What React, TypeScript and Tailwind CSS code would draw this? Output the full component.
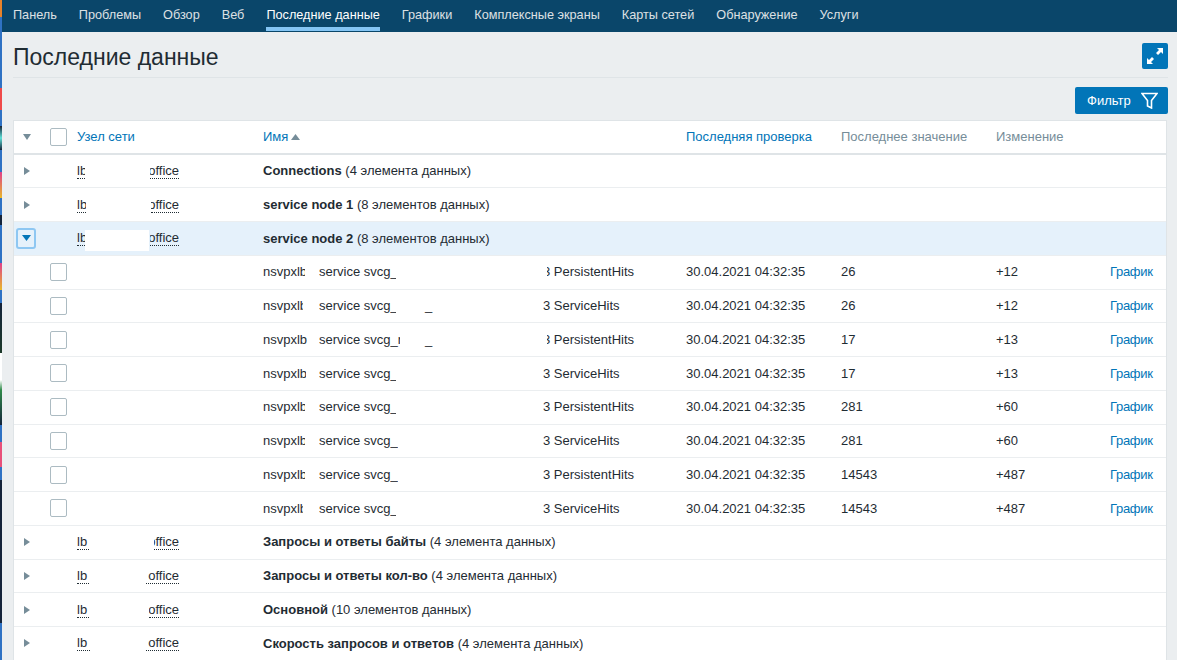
const nav = ["Панель", "Проблемы", "Обзор", "Веб", "Последние данные", "Графики", "Комплексные экраны", "Карты сетей", "Обнаружение", "Услуги"];

type Group = { a: number; b: number; title: string; count: string; open?: boolean };

function HostCell({ a, b, patch }: { a: number; b: number; patch?: boolean }) {
  return (
    <div className="flex w-[186px] shrink-0 items-center">
      <div className="flex w-[102px] shrink-0 items-center">
        <span className="block h-[16px] overflow-hidden border-b border-dotted border-[#1f2c33] leading-[16px]" style={{ width: a }}>
          lb
        </span>
        <span className={patch ? "h-[21px] w-[64px] shrink-0 translate-y-[2px] bg-white" : "hidden"} />
        <span className="ml-auto flex h-[16px] justify-end overflow-hidden border-b border-dotted border-[#1f2c33] leading-[16px]" style={{ width: b }}>
          <span className="shrink-0">office</span>
        </span>
      </div>
    </div>
  );
}

function GroupRow({ a, b, title, count, open }: Group) {
  return (
    <div className={`flex h-[33.75px] items-center border-b border-[#ebeef0] ${open ? "bg-[#e5f1fb]" : "bg-white"}`}>
      <div className="flex w-[63px] shrink-0 items-center pl-[2px]">
        {open ? (
          <span className="flex h-[21px] w-[20px] items-center justify-center rounded-[3px] border-2 border-[#8ec7f2]">
            <svg width="9" height="6" viewBox="0 0 9 6"><path d="M0 0h9L4.5 6z" fill="#0275b8" /></svg>
          </span>
        ) : (
          <svg className="ml-[8px]" width="6" height="8" viewBox="0 0 6 8"><path d="M0 0l6 4-6 4z" fill="#768d99" /></svg>
        )}
      </div>
      <HostCell a={a} b={b} patch={open} />
      <div className="whitespace-nowrap"><b className="font-bold">{title}</b> ({count})</div>
    </div>
  );
}

function Check() {
  return <span className="block h-[18px] w-[17px] rounded-[2px] border border-[#acbbc2] bg-white" />;
}

type Item = { host: number; svc: number; under?: boolean; metric: string; cut?: boolean; time: string; value: string; delta: string };

function ItemRow({ host, svc, under, metric, cut, value, delta, time }: Item) {
  return (
    <div className="flex h-[33.75px] items-center border-b border-[#ebeef0] bg-white">
      <div className="w-[36px] shrink-0" />
      <div className="w-[213px] shrink-0"><Check /></div>
      <div className="flex w-[423px] shrink-0 items-center whitespace-nowrap">
        <span className="block w-[56px] shrink-0"><span className="block overflow-hidden" style={{ width: host }}>nsvpxlb-</span></span>
        <span className="block w-[106px] shrink-0"><span className="block overflow-hidden" style={{ width: svc }}>service svcg_nsv</span></span>
        <span className="block w-[118px] shrink-0">{under ? "_" : ""}</span>
        <span className="block w-[143px] shrink-0">
          {cut ? (
            <span className="ml-[4px] block overflow-hidden"><span className="-ml-[4px] block">{metric}</span></span>
          ) : (
            metric
          )}
        </span>
      </div>
      <div className="w-[155px] shrink-0">{time}</div>
      <div className="w-[155px] shrink-0">{value}</div>
      <div className="w-[114px] shrink-0">{delta}</div>
      <div className="shrink-0 tracking-[-0.3px] text-[#0275b8]">График</div>
    </div>
  );
}

const T = "30.04.2021 04:32:35";
const PH = "3 PersistentHits";
const SH = "3 ServiceHits";

const items: Item[] = [
  { host: 42, svc: 77, metric: PH, cut: true, time: T, value: "26", delta: "+12" },
  { host: 40, svc: 77, under: true, metric: SH, time: T, value: "26", delta: "+12" },
  { host: 44, svc: 81, under: true, metric: PH, cut: true, time: T, value: "17", delta: "+13" },
  { host: 43, svc: 77, metric: SH, time: T, value: "17", delta: "+13" },
  { host: 42, svc: 77, metric: PH, time: T, value: "281", delta: "+60" },
  { host: 42, svc: 79, metric: SH, time: T, value: "281", delta: "+60" },
  { host: 42, svc: 79, metric: PH, time: T, value: "14543", delta: "+487" },
  { host: 40, svc: 77, metric: SH, time: T, value: "14543", delta: "+487" },
];

const before: Group[] = [
  { a: 8, b: 29, title: "Connections", count: "4 элемента данных" },
  { a: 9, b: 28, title: "service node 1", count: "8 элементов данных" },
  { a: 8, b: 29, title: "service node 2", count: "8 элементов данных", open: true },
];
const after: Group[] = [
  { a: 12, b: 25, title: "Запросы и ответы байты", count: "4 элемента данных" },
  { a: 12, b: 33, title: "Запросы и ответы кол-во", count: "4 элемента данных" },
  { a: 12, b: 30, title: "Основной", count: "10 элементов данных" },
  { a: 13, b: 33, title: "Скорость запросов и ответов", count: "4 элемента данных" },
];

export default function App() {
  return (
    <div className="flex h-[660px] w-[1177px] overflow-hidden bg-[#ebeef0] font-['Liberation_Sans',Arial,sans-serif] text-[13px] text-[#1f2c33]">
      <div className="w-[2px] shrink-0 bg-[linear-gradient(180deg,#e8822a_0,#e8822a_17px,#2f72c4_17px,#2f72c4_88px,#ef4a4a_88px,#ef4a4a_110px,#2f72c4_110px,#2f72c4_126px,#14233a_126px,#5fe0d8_138px,#14233a_150px,#2f72c4_150px,#2f72c4_172px,#e0408a_172px,#e8b82a_198px,#2f72c4_198px,#2f72c4_215px,#14233a_215px,#14233a_225px,#2f72c4_225px,#2f72c4_263px,#e0408a_263px,#e8b82a_290px,#2f72c4_290px,#2f72c4_303px,#14233a_303px,#1c3a2a_353px,#ffffff_353px,#ffffff_380px,#2f8a4a_390px,#14233a_425px,#2f72c4_425px,#2f72c4_442px,#e8507a_442px,#e8507a_467px,#2f72c4_467px,#2f72c4_480px,#14233a_480px,#14233a_623px,#2f72c4_623px,#2f72c4_660px)]" />
      <div className="min-w-0 flex-1">
        <nav className="flex h-[32px] items-start gap-[22px] bg-[#0a466a] pl-[11px] text-[12.7px] text-[#f2f2f2]">
          {nav.map((n, i) => (
            <span key={n} className={`h-[31px] pt-[8px] leading-[15px] ${i === 4 ? "border-b-[4px] border-[#84c5f4] text-white" : "opacity-90"}`}>{n}</span>
          ))}
        </nav>
        <div className="pl-[11px] pr-[9px]">
          <div className="flex h-[46px] items-start justify-between border-b border-[#dfe4e7]">
            <h1 className="pt-[11px] text-[23px] leading-[28px] font-normal">Последние данные</h1>
            <span className="mt-[11px] flex h-[26px] w-[26px] items-center justify-center rounded-[2px] bg-[#0275b8]">
              <svg width="18" height="18" viewBox="0 0 18 18" fill="#fff"><path d="M11 1h6v6l-2-2-3 3-2-2 3-3zM7 17H1v-6l2 2 3-3 2 2-3 3z" /></svg>
            </span>
          </div>
          <div className="flex h-[42px] items-start justify-end pt-[9px]">
            <span className="flex h-[27px] w-[93px] items-center justify-between rounded-[2px] bg-[#0275b8] pl-[12px] pr-[10px] text-white">
              Фильтр
              <svg width="17" height="17" viewBox="0 0 17 17" fill="none" stroke="#fff" strokeWidth="1.6"><path d="M1 1.5h15L10.5 8.5v7.5l-4-2V8.5z" /></svg>
            </span>
          </div>
          <div className="mr-[1px] border-x border-t border-[#dfe4e7] bg-white">
            <div className="flex h-[33.6px] items-center border-b-[2px] border-[#dfe4e7] text-[#0275b8]">
              <div className="w-[36px] shrink-0 pl-[9px]">
                <svg width="8" height="6" viewBox="0 0 8 6"><path d="M0 0h8L4 6z" fill="#768d99" /></svg>
              </div>
              <div className="w-[27px] shrink-0"><Check /></div>
              <div className="w-[186px] shrink-0">Узел сети</div>
              <div className="flex w-[423px] shrink-0 items-center gap-[3px]">
                Имя
                <svg width="9" height="6" viewBox="0 0 9 6"><path d="M0 6h9L4.5 0z" fill="#768d99" /></svg>
              </div>
              <div className="w-[155px] shrink-0">Последняя проверка</div>
              <div className="w-[155px] shrink-0 text-[#768d99]">Последнее значение</div>
              <div className="w-[100px] shrink-0 text-[#768d99]">Изменение</div>
            </div>
            {before.map((g) => <GroupRow key={g.title} {...g} />)}
            {items.map((it, i) => <ItemRow key={i} {...it} />)}
            {after.map((g) => <GroupRow key={g.title} {...g} />)}
          </div>
        </div>
      </div>
    </div>
  );
}
